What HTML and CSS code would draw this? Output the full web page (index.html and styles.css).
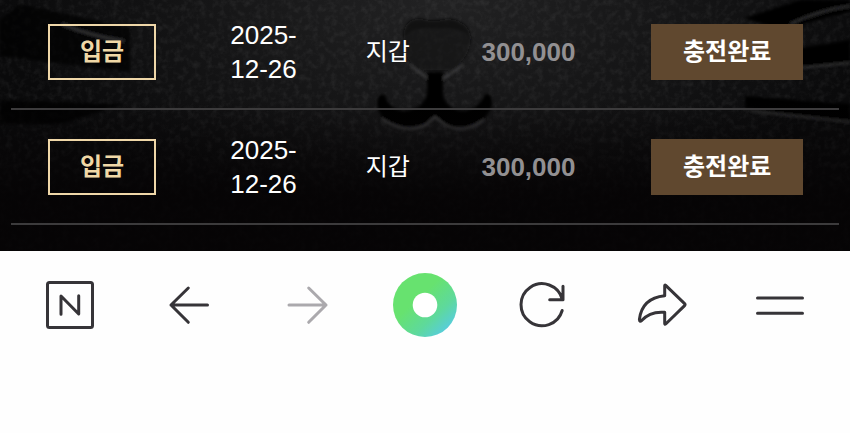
FILE: index.html
```html
<!DOCTYPE html>
<html lang="ko">
<head>
  <meta charset="UTF-8">
  <meta name="viewport" content="width=device-width, initial-scale=1.0">
  <title>입금 내역</title>
  <link rel="stylesheet" href="styles.css">
</head>
<body>

<main class="history">
  <svg class="history-bg" viewBox="0 0 850 251" preserveAspectRatio="xMidYMid slice" aria-hidden="true">
    <defs>
      <radialGradient id="glow" gradientUnits="userSpaceOnUse" cx="440" cy="0" r="440" gradientTransform="matrix(1 0 0 0.5 0 0)">
        <stop offset="0" stop-color="#222223"/>
        <stop offset="0.5" stop-color="#161617"/>
        <stop offset="1" stop-color="#0a0a0b"/>
      </radialGradient>
      <linearGradient id="shade" x1="0" y1="0" x2="0" y2="1">
        <stop offset="0.4" stop-color="#050304" stop-opacity="0"/>
        <stop offset="0.78" stop-color="#050304" stop-opacity="0.85"/>
      </linearGradient>
      <filter id="grain" x="0" y="0" width="100%" height="100%">
        <feTurbulence type="fractalNoise" baseFrequency="0.16" numOctaves="3" seed="4"/>
        <feColorMatrix values="0 0 0 0 0.6  0 0 0 0 0.6  0 0 0 0 0.6  0.9 0 0 0 -0.38"/>
      </filter>
      <filter id="soft"><feGaussianBlur stdDeviation="1.5"/></filter>
    </defs>
    <rect width="850" height="251" fill="url(#glow)"/>
    <rect width="850" height="251" filter="url(#grain)" opacity="0.18"/>
    <g filter="url(#soft)">
      <!-- whiskers -->
      <path d="M20 4L130 28V72L0 56V20Z" fill="#050506" opacity="0.7"/>
      <path d="M0 100L125 104L60 124H0Z" fill="#050506" opacity="0.8"/>
      <path d="M744 18L800 0H850V12L780 30Z" fill="#060606"/>
      <path d="M745 96L850 104V124L745 108Z" fill="#060606"/>
      <path d="M800 48L850 40V62L800 68Z" fill="#060606"/>
      <path d="M62 24Q90 36 124 41" fill="none" stroke="#39393a" stroke-width="2"/>
      <path d="M790 24Q820 10 850 6M800 68L850 63M750 111L850 122" fill="none" stroke="#303031" stroke-width="2"/>
      <!-- nose and mouth -->
      <path d="M404 38C402 24 412 17 422 19Q434 22 446 19C460 18 472 28 471 40Q464 28 448 28H422Q408 29 404 38Z" fill="#0a0a0b" opacity="0.85"/>
      <path d="M404 36Q402 60 420 70H452Q470 58 471 38Q462 26 446 26H424Q408 28 404 36Z" fill="#0e0e0f" opacity="0.6"/>
      <path d="M427 72H443V94Q445 108 462 111Q478 110 485 94Q493 92 492 106Q484 127 459 128Q443 126 435 117Q425 128 405 129Q382 126 377 106Q376 92 385 95Q389 110 405 111Q425 108 427 92Z" fill="#060606"/>
      <path d="M411 66L427 78M463 65L443 79M382 119Q405 135 426 125L435 117L445 125Q463 135 484 120" fill="none" stroke="#414142" stroke-width="2"/>
    </g>
    <rect width="850" height="251" fill="url(#shade)"/>
  </svg>

  <table class="history-table">
    <colgroup>
      <col class="col-type">
      <col class="col-date">
      <col class="col-target">
      <col class="col-amount">
      <col class="col-status">
    </colgroup>
    <tbody>
      <tr>
        <td><span class="tag tag-type">입금</span></td>
        <td class="date">2025-12-26</td>
        <td>지갑</td>
        <td class="amount">300,000</td>
        <td><span class="tag tag-status">충전완료</span></td>
      </tr>
      <tr>
        <td><span class="tag tag-type">입금</span></td>
        <td class="date">2025-12-26</td>
        <td>지갑</td>
        <td class="amount">300,000</td>
        <td><span class="tag tag-status">충전완료</span></td>
      </tr>
    </tbody>
  </table>
</main>

<nav class="toolbar">
  <button type="button" aria-label="네이버 홈">
    <svg viewBox="0 0 64 64">
      <rect x="9.5" y="9.5" width="45" height="45" rx="2"/>
      <path d="M23 41.3V23L40.7 41V22.7"/>
    </svg>
  </button>
  <button type="button" aria-label="뒤로">
    <svg viewBox="0 0 64 64"><path d="M51.5 32H15M32.3 15L15 32L32.3 49.3"/></svg>
  </button>
  <button type="button" aria-label="앞으로" disabled>
    <svg viewBox="0 0 64 64"><path d="M14 32H51M33.7 15L51 32L33.7 49.3"/></svg>
  </button>
  <button type="button" aria-label="그린닷">
    <svg viewBox="0 0 64 64">
      <defs>
        <linearGradient id="dot" x1="0.25" y1="0.2" x2="0.9" y2="0.9">
          <stop offset="0.25" stop-color="#67e26f"/>
          <stop offset="0.65" stop-color="#5ed99c"/>
          <stop offset="1" stop-color="#56cbe6"/>
        </linearGradient>
      </defs>
      <circle class="dot" cx="32" cy="32" r="32" fill="url(#dot)"/>
      <circle class="dot" cx="32" cy="32" r="12.3" fill="#fff"/>
    </svg>
  </button>
  <button type="button" aria-label="새로고침">
    <svg viewBox="0 0 64 64"><path d="M51.3 26.3A21 21 0 1 0 51.2 37.5M52 13.3V26.7H38.7"/></svg>
  </button>
  <button type="button" aria-label="공유">
    <svg viewBox="0 0 64 64"><path d="M34.7 12.8Q34.7 11.5 35.7 12.4L54.6 30.6Q55.6 31.6 54.6 32.6L35.7 51Q34.7 51.9 34.7 50.6V39.3Q20 38 11.6 47.6Q9.6 49.4 9.4 46.4Q12 25 34.7 22.7Z"/></svg>
  </button>
  <button type="button" aria-label="메뉴">
    <svg viewBox="0 0 64 64"><path d="M9.5 25H54.5M9.5 40.3H54.5"/></svg>
  </button>
</nav>

</body>
</html>
```
FILE: styles.css
```css
* {
  box-sizing: border-box;
}

body {
  margin: 0;
  background-color: #fefefe;
  color: #fff;
  font-family: "Liberation Sans", "Noto Sans CJK KR", sans-serif;
}

.history {
  position: relative;
  overflow: hidden;
  padding: 0 11px 26px;
  background-color: #09090a;
}

.history-bg {
  position: absolute;
  top: 0;
  left: 0;
  width: 100%;
  height: 100%;
}

.history-table {
  position: relative;
  width: 100%;
  margin-top: -5px;
  table-layout: fixed;
  border-collapse: separate;
  border-spacing: 0;
  line-height: 34px;
  text-align: center;
}

.col-type {
  width: 22%;
}

.col-date {
  width: 17%;
}

.col-target {
  width: 13%;
}

.col-amount {
  width: 21%;
}

.col-status {
  width: 27%;
}

.history-table td {
  height: 115px;
  padding: 0;
  border-bottom: 2px solid #3c3b3c;
  vertical-align: middle;
  font-size: 24px;
}

.history-table .date {
  padding: 0 30px;
  font-size: 26px;
}

.history-table .amount {
  color: #929092;
  font-size: 26px;
  font-weight: bold;
}

.tag {
  display: inline-block;
  padding: 9px 30px;
  border: 2px solid transparent;
  font-weight: bold;
  vertical-align: middle;
}

.tag-type {
  border-color: #efd7a8;
  color: #f0d8a6;
}

.tag-status {
  border-color: #60482f;
  background-color: #60482f;
}

.toolbar {
  display: flex;
  justify-content: space-between;
  padding: 22px 38px;
}

.toolbar button {
  width: 64px;
  height: 64px;
  padding: 0;
  border: none;
  background: none;
  color: #363438;
  cursor: pointer;
}

.toolbar button:disabled {
  color: #aba9ad;
  cursor: default;
}

.toolbar svg {
  display: block;
  width: 100%;
  height: 100%;
  fill: none;
  stroke: currentColor;
  stroke-width: 3;
  stroke-linecap: round;
  stroke-linejoin: round;
}

.toolbar .dot {
  stroke: none;
}
```
